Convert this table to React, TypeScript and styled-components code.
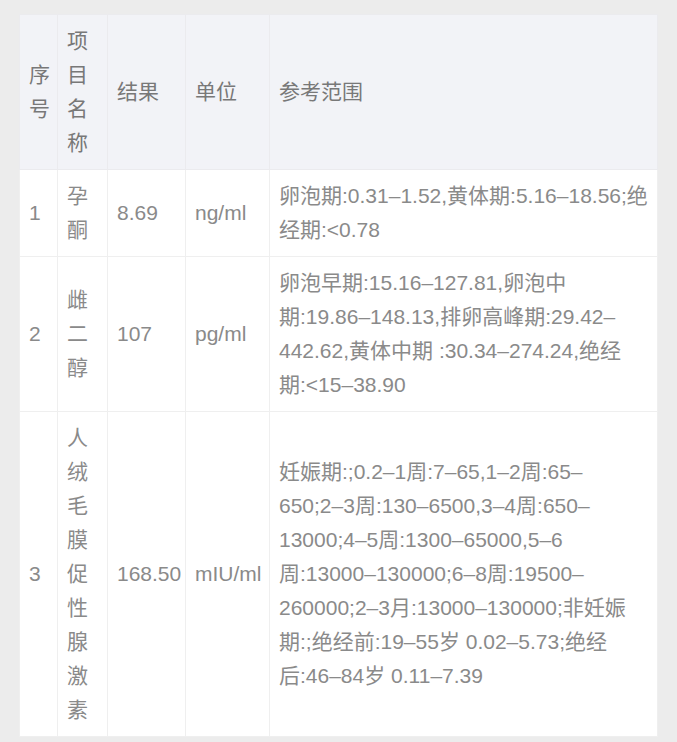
import React from "react";
import styled, { createGlobalStyle } from "styled-components";

const GlobalStyle = createGlobalStyle`
  html, body {
    margin: 0;
    padding: 0;
    background: #ececec;
  }
  body {
    font-family: "Liberation Sans", "Noto Sans CJK SC", sans-serif;
    -webkit-font-smoothing: antialiased;
  }
`;

const Page = styled.div`
  width: 677px;
  min-height: 742px;
  box-sizing: border-box;
  padding: 14px 20px 5px 19px;
  background: #ececec;
`;

const Table = styled.table`
  width: 638px;
  border-collapse: collapse;
  table-layout: fixed;
  background: #ffffff;
  font-size: 21px;
  line-height: 34px;
`;

const HeadRow = styled.tr`
  background: #f2f3f7;
`;

const HeadCell = styled.th`
  padding: 9px 8px 9px 9px;
  border: 1px solid #ebebee;
  color: #787878;
  font-weight: normal;
  text-align: left;
  vertical-align: middle;
`;

const BodyRow = styled.tr`
  background: #ffffff;
`;

const Cell = styled.td<{ $nowrap?: boolean }>`
  padding: 9px 8px 9px 9px;
  border: 1px solid #efefef;
  color: #8a8a8a;
  text-align: left;
  vertical-align: middle;
  white-space: ${(p) => (p.$nowrap ? "nowrap" : "normal")};
`;

const RangeLine = styled.span`
  display: block;
  white-space: nowrap;
`;

type Row = {
  no: string;
  name: string;
  result: string;
  unit: string;
  range: string[];
};

const rows: Row[] = [
  {
    no: "1",
    name: "孕酮",
    result: "8.69",
    unit: "ng/ml",
    range: ["卵泡期:0.31–1.52,黄体期:5.16–18.56;绝", "经期:<0.78"],
  },
  {
    no: "2",
    name: "雌二醇",
    result: "107",
    unit: "pg/ml",
    range: [
      "卵泡早期:15.16–127.81,卵泡中",
      "期:19.86–148.13,排卵高峰期:29.42–",
      "442.62,黄体中期 :30.34–274.24,绝经",
      "期:<15–38.90",
    ],
  },
  {
    no: "3",
    name: "人绒毛膜促性腺激素",
    result: "168.50",
    unit: "mIU/ml",
    range: [
      "妊娠期:;0.2–1周:7–65,1–2周:65–",
      "650;2–3周:130–6500,3–4周:650–",
      "13000;4–5周:1300–65000,5–6",
      "周:13000–130000;6–8周:19500–",
      "260000;2–3月:13000–130000;非妊娠",
      "期:;绝经前:19–55岁 0.02–5.73;绝经",
      "后:46–84岁 0.11–7.39",
    ],
  },
];

export default function App() {
  return (
    <>
      <GlobalStyle />
      <Page>
        <Table>
          <colgroup>
            <col style={{ width: 38 }} />
            <col style={{ width: 50 }} />
            <col style={{ width: 78 }} />
            <col style={{ width: 84 }} />
            <col style={{ width: 388 }} />
          </colgroup>
          <thead>
            <HeadRow>
              <HeadCell>序号</HeadCell>
              <HeadCell>项目名称</HeadCell>
              <HeadCell>结果</HeadCell>
              <HeadCell>单位</HeadCell>
              <HeadCell>参考范围</HeadCell>
            </HeadRow>
          </thead>
          <tbody>
            {rows.map((r) => (
              <BodyRow key={r.no}>
                <Cell>{r.no}</Cell>
                <Cell>{r.name}</Cell>
                <Cell $nowrap>{r.result}</Cell>
                <Cell $nowrap>{r.unit}</Cell>
                <Cell>
                  {r.range.map((line, i) => (
                    <RangeLine key={i}>{line}</RangeLine>
                  ))}
                </Cell>
              </BodyRow>
            ))}
          </tbody>
        </Table>
      </Page>
    </>
  );
}
